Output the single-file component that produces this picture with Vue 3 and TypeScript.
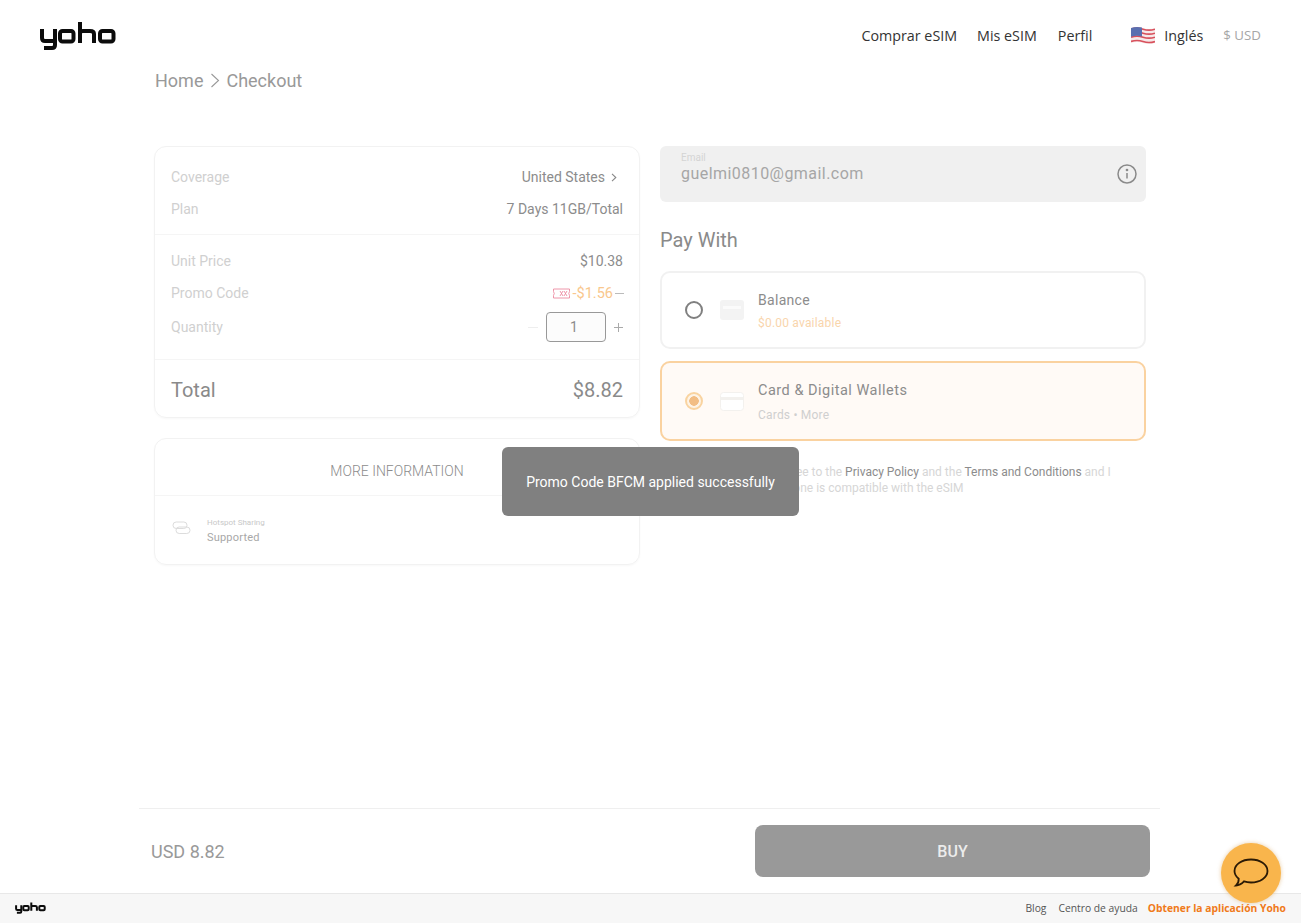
<template>
  <div class="page">
    <!-- top nav -->
    <header class="nav">
      <svg class="logo" width="76" height="30" viewBox="0 0 76 30" fill="none" stroke="#0c0c0c" stroke-width="4">
        <path d="M2 8v9q0 3 3 3h8q2 0 2-2V8M15 18v6q0 3-3 3H4" />
        <rect x="20" y="10" width="13.5" height="10.500" rx="2.500" />
        <path d="M40 1v21M40 12q0-2 3-2h7q4 0 4 3v9" />
        <rect x="60" y="10" width="13.500" height="10.500" rx="2.500" />
      </svg>
      <nav class="nav__links">
        <a>Comprar eSIM</a>
        <a>Mis eSIM</a>
        <a>Perfil</a>
        <span class="nav__lang">
          <svg width="24" height="19" viewBox="0 0 24 19" fill="none">
            <path d="M0 2q6-2 12 0t12 0v15q-6 2-12 0t-12 0z" fill="#f6e9e9" />
            <path d="M0 3.200q6-2 12 0t12 0M0 7.200q6-2 12 0t12 0M0 11.200q6-2 12 0t12 0M0 15.500q6-2 12 0t12 0" stroke="#d8505c" stroke-width="1.700" />
            <path d="M0 2q5.500-1.800 11-.4V10.500Q5.500 9 0 10.800z" fill="#5a6fb0" />
          </svg>
          Inglés
        </span>
        <span class="nav__currency">$ USD</span>
      </nav>
    </header>

    <main class="main">
      <div class="crumbs">
        <span>Home</span>
        <svg width="10" height="15" viewBox="0 0 10 15" fill="none" stroke="#999" stroke-width="1.100"><path d="M1.500 1l7 6.500-7 6.500" /></svg>
        <span>Checkout</span>
      </div>

      <div class="columns">
        <div class="col">
          <section class="card">
            <div class="group group--top">
              <div class="row">
                <span class="row__label">Coverage</span>
                <span class="row__value">United States
                  <svg width="6" height="9" viewBox="0 0 6 9" fill="none" stroke="#888" stroke-width="1.100"><path d="M1 .8l3.800 3.700L1 8.200" /></svg>
                </span>
              </div>
              <div class="row">
                <span class="row__label">Plan</span>
                <span class="row__value row__value--end">7 Days 11GB/Total</span>
              </div>
            </div>
            <div class="group group--mid">
              <div class="row">
                <span class="row__label">Unit Price</span>
                <span class="row__value row__value--end">$10.38</span>
              </div>
              <div class="row">
                <span class="row__label">Promo Code</span>
                <span class="promo">
                  <svg width="17" height="11" viewBox="0 0 17 11" fill="none" stroke="#ec8ba0" stroke-width=".9">
                    <path d="M.5 1h16v2.500q-1.500 2 0 4V10H.5V7.500q1.500-2 0-4z" />
                    <path d="M7 3l3 5M10 3L7 8M11 3l3 5M14 3l-3 5" />
                  </svg>
                  <span class="promo__amount">-$1.56</span>
                  <i class="promo__dash"></i>
                </span>
              </div>
              <div class="row row--qty">
                <span class="row__label">Quantity</span>
                <span class="qty">
                  <i class="qty__minus"></i>
                  <span class="qty__box">1</span>
                  <svg width="9" height="9" viewBox="0 0 9 9" stroke="#aaa" stroke-width="1"><path d="M0 4.500h9M4.500 0v9" /></svg>
                </span>
              </div>
            </div>
            <div class="total">
              <span>Total</span>
              <span class="total__amount">$8.82</span>
            </div>
          </section>

          <section class="card card--info">
            <div class="info__head">MORE INFORMATION</div>
            <div class="info__body">
              <svg class="info__icon" width="20" height="14" viewBox="0 0 20 14" fill="none" stroke="#dcdcdc" stroke-width="1">
                <rect x="1" y="1" width="14" height="6.500" rx="3.200" />
                <rect x="4" y="6" width="14" height="6.500" rx="3.200" />
              </svg>
              <div>
                <div class="info__small">Hotspot Sharing</div>
                <div class="info__text">Supported</div>
              </div>
            </div>
          </section>
        </div>

        <div class="col">
          <div class="email">
            <div>
              <div class="email__label">Email</div>
              <div class="email__value">guelmi0810@gmail.com</div>
            </div>
            <svg width="20" height="20" viewBox="0 0 20 20" fill="none" stroke="#8a8a8a" stroke-width="1.500">
              <circle cx="10" cy="10" r="9" />
              <path d="M10 9v5.500" />
              <circle cx="10" cy="6" r=".6" />
            </svg>
          </div>

          <h2 class="pay-title">Pay With</h2>

          <div class="method">
            <span class="radio"></span>
            <svg class="method__icon" width="24" height="20" viewBox="0 0 24 20">
              <rect width="24" height="20" rx="3" fill="#f3f3f3" />
              <rect x="3" y="6" width="18" height="3" fill="#fbfbfb" />
            </svg>
            <div>
              <div class="method__name">Balance</div>
              <div class="method__sub method__sub--orange">$0.00 available</div>
            </div>
          </div>

          <div class="method method--active">
            <span class="radio radio--on"></span>
            <svg class="method__icon" width="24" height="19" viewBox="0 0 24 19">
              <rect x=".5" y=".5" width="23" height="18" rx="3" fill="#fff" stroke="#f3f1ee" />
              <rect x="1" y="5" width="22" height="3" fill="#f3f1ee" />
            </svg>
            <div>
              <div class="method__name method__name--big">Card &amp; Digital Wallets</div>
              <div class="method__sub method__sub--big">Cards • More</div>
            </div>
          </div>

          <p class="terms">
            By clicking BUY, I agree to the <b>Privacy Policy</b> and the <b>Terms and Conditions</b> and I
            confirm that your phone is compatible with the eSIM
          </p>
        </div>
      </div>
    </main>

    <!-- buy bar -->
    <div class="buybar">
      <span class="buybar__price">USD 8.82</span>
      <button class="buybar__btn">BUY</button>
    </div>

    <footer class="foot">
      <svg width="31" height="12" viewBox="0 0 76 30" fill="none" stroke="#0c0c0c" stroke-width="5">
        <path d="M2 8v9q0 3 3 3h8q2 0 2-2V8M15 18v6q0 3-3 3H4" />
        <rect x="20" y="10" width="13.500" height="10.500" rx="2.500" />
        <path d="M40 1v21M40 12q0-2 3-2h7q4 0 4 3v9" />
        <rect x="60" y="10" width="13.500" height="10.500" rx="2.500" />
      </svg>
      <div class="foot__links">
        <a class="foot__blog">Blog</a>
        <a>Centro de ayuda</a>
        <a class="foot__app">Obtener la aplicación Yoho</a>
      </div>
    </footer>

    <div class="toast">Promo Code BFCM applied successfully</div>

    <div class="chat">
      <svg width="36" height="30" viewBox="0 0 36 30" fill="none" stroke="#2b1a05" stroke-width="1.800">
        <path d="M18 1.500C27 1.500 34.500 6.500 34.500 13S27 24.500 18 24.500c-2.500 0-5-.4-7-1.100C9 25.500 6 27.500 3 27.500c1.800-1.500 2.800-4 2.700-6.800C3 18.500 1.500 16 1.500 13 1.500 6.500 9 1.500 18 1.500z" />
      </svg>
    </div>
  </div>
</template>

<script setup lang="ts">
</script>

<style>
html, body { margin: 0; background: #fff; }
</style>

<style scoped>
.page {
  position: relative;
  height: 923px;
  display: flex;
  flex-direction: column;
  overflow: hidden;
  font-family: Roboto, "Liberation Sans", sans-serif;
  color: #8c8c8c;
}

.nav {
  height: 70px;
  flex: none;
  display: flex;
  justify-content: space-between;
  align-items: center;
  padding: 0 40px;
  box-sizing: border-box;
}
.logo { margin-top: 1px; }
.nav__links {
  display: flex;
  align-items: center;
  font-family: "Open Sans", "Noto Sans", sans-serif;
  font-size: 14.300px;
  color: #333;
}
.nav__links a { margin-right: 20px; }
.nav__links a:nth-child(2) { margin-right: 21px; }
.nav__links a:nth-child(3) { margin-right: 39px; }
.nav__lang { display: flex; align-items: center; gap: 9px; margin-right: 20px; }
.nav__currency { color: #a6a6a6; font-size: 13.300px; }

.main { flex: 1; padding: 0 154px; }

.crumbs {
  display: flex;
  align-items: center;
  gap: 6.500px;
  height: 22px;
  margin: -1px 0 0 1px;
  font-size: 18px;
  color: #999;
}

.columns {
  display: grid;
  grid-template-columns: 486px 486px;
  gap: 20px;
  margin-top: 55px;
}
.col { min-width: 0; }

.card {
  border: 1px solid #f2f2f2;
  border-radius: 12px;
  box-shadow: 0 1px 2px rgba(0, 0, 0, 0.03);
  box-sizing: border-box;
}
.group { padding: 0 16px; border-bottom: 1px solid #f5f5f5; }
.group--top { padding-top: 14px; padding-bottom: 9px; }
.group--mid { padding-top: 10px; padding-bottom: 14px; }
.row {
  height: 32px;
  display: flex;
  justify-content: space-between;
  align-items: center;
  font-size: 14px;
}
.row--qty { height: 36px; }
.row__label { color: #d0d0d0; }
.row__value { color: #8c8c8c; display: flex; align-items: center; gap: 6px; padding-right: 6px; }
.row__value--end { padding-right: 0; }

.promo { display: flex; align-items: center; gap: 3px; }
.promo__amount { color: #f9c78d; font-size: 14.500px; margin-right: -1px; }
.promo__dash { width: 9px; height: 1px; background: #bbb; margin-right: -1px; }

.qty { display: flex; align-items: center; }
.qty__minus { width: 10px; height: 1px; background: #eee; margin-right: 8px; }
.qty__box {
  width: 60px;
  height: 30px;
  box-sizing: border-box;
  border: 1px solid #999;
  border-radius: 4px;
  background: #fcfcfc;
  text-align: center;
  line-height: 28px;
  padding-right: 4px;
  margin-right: 8px;
  color: #8c8c8c;
}

.total {
  height: 57px;
  box-sizing: border-box;
  display: flex;
  justify-content: space-between;
  align-items: center;
  padding: 3px 16px 0;
  font-size: 20px;
  color: #8a8a8a;
}

.card--info { margin-top: 20px; }
.info__head {
  height: 56px;
  line-height: 64px;
  text-align: center;
  font-size: 14px;
  font-weight: 300;
  border-bottom: 1px solid #f5f5f5;
  color: #8c8c8c;
}
.info__body {
  height: 68px;
  box-sizing: border-box;
  padding: 1px 17px 0;
  display: flex;
  align-items: center;
  gap: 15px;
}
.info__icon { margin-top: -5px; }
.info__small { font-size: 8px; color: #c8c8c8; margin-bottom: 4px; }
.info__text { font-size: 11px; color: #a8a8a8; letter-spacing: 0.2px; }

.email {
  height: 56px;
  border-radius: 6px;
  background: #f0f0f0;
  display: flex;
  justify-content: space-between;
  align-items: center;
  padding: 0 9px 0 21px;
}
.email > div { margin-top: -12px; }
.email__label { font-size: 10px; color: #d4d4d4; line-height: 11px; }
.email__value { font-size: 16px; color: #a6a6a6; letter-spacing: 0.45px; line-height: 21px; }

.pay-title {
  margin: 26px 0 19px;
  font-size: 20px;
  font-weight: 400;
  line-height: 24px;
  color: #8a8a8a;
}

.method {
  height: 78px;
  box-sizing: border-box;
  border: 2px solid #f1f1f1;
  border-radius: 10px;
  display: flex;
  align-items: center;
  padding-left: 23px;
  margin-bottom: 12px;
}
.method--active { height: 80px; border-color: #fad2a0; background: #fffaf6; }
.radio {
  width: 18px;
  height: 18px;
  border-radius: 50%;
  border: 2px solid #808080;
  box-sizing: border-box;
  flex: none;
}
.radio--on {
  border: 2px solid #f9d3a0;
  background: radial-gradient(circle, #f2bd84 0 4.500px, #fdf3e6 5px);
}
.method__icon { margin: 0 14px 0 17px; flex: none; }
.method__name { font-size: 14px; color: #8c8c8c; letter-spacing: 0.3px; line-height: 20px; }
.method__name--big { font-size: 14.500px; letter-spacing: 0.5px; }
.method__sub { font-size: 12px; color: #cfcfcf; margin-top: 6px; line-height: 15px; letter-spacing: 0.2px; }
.method__sub--big { margin-top: 7px; margin-bottom: -1px; }
.method__sub--orange { color: #f9d5ac; }

.terms {
  margin: 23px 22px 0 26px;
  font-size: 12px;
  line-height: 16px;
  color: #d6d6d6;
}
.terms b { font-weight: 400; color: #8c8c8c; }

.buybar {
  flex: none;
  height: 84px;
  box-sizing: border-box;
  margin: 0 141px 0 139px;
  border-top: 1px solid #efefef;
  display: flex;
  justify-content: space-between;
  align-items: center;
  padding: 1px 10px 0 12px;
}
.buybar__price { font-size: 18px; color: #999; }
.buybar__btn {
  width: 395px;
  height: 52px;
  border: 0;
  border-radius: 8px;
  background: #999;
  color: #ececec;
  font-family: inherit;
  font-size: 16px;
  font-weight: 500;
}

.foot {
  flex: none;
  height: 30px;
  box-sizing: border-box;
  margin-top: 1px;
  border-top: 1px solid #e8e8e8;
  background: #f7f7f7;
  display: flex;
  justify-content: space-between;
  align-items: center;
  padding: 0 15px 2px;
  font-family: "Open Sans", "Noto Sans", sans-serif;
  font-size: 10.300px;
  color: #555;
}
.foot__links { display: flex; gap: 10px; }
.foot__blog { margin-right: 2px; }
.foot__app { color: #f07a1a; font-weight: 700; }

.toast {
  position: absolute;
  left: 502px;
  top: 447px;
  width: 297px;
  height: 69px;
  box-sizing: border-box;
  padding-top: 1px;
  border-radius: 6px;
  background: #808080;
  color: #fff;
  font-size: 14px;
  display: flex;
  align-items: center;
  justify-content: center;
}

.chat {
  position: absolute;
  left: 1221px;
  top: 843px;
  width: 60px;
  height: 60px;
  border-radius: 50%;
  background: #f9b54c;
  box-shadow: 0 0 4px rgba(200, 130, 30, 0.4);
  display: flex;
  align-items: center;
  justify-content: center;
}
</style>
